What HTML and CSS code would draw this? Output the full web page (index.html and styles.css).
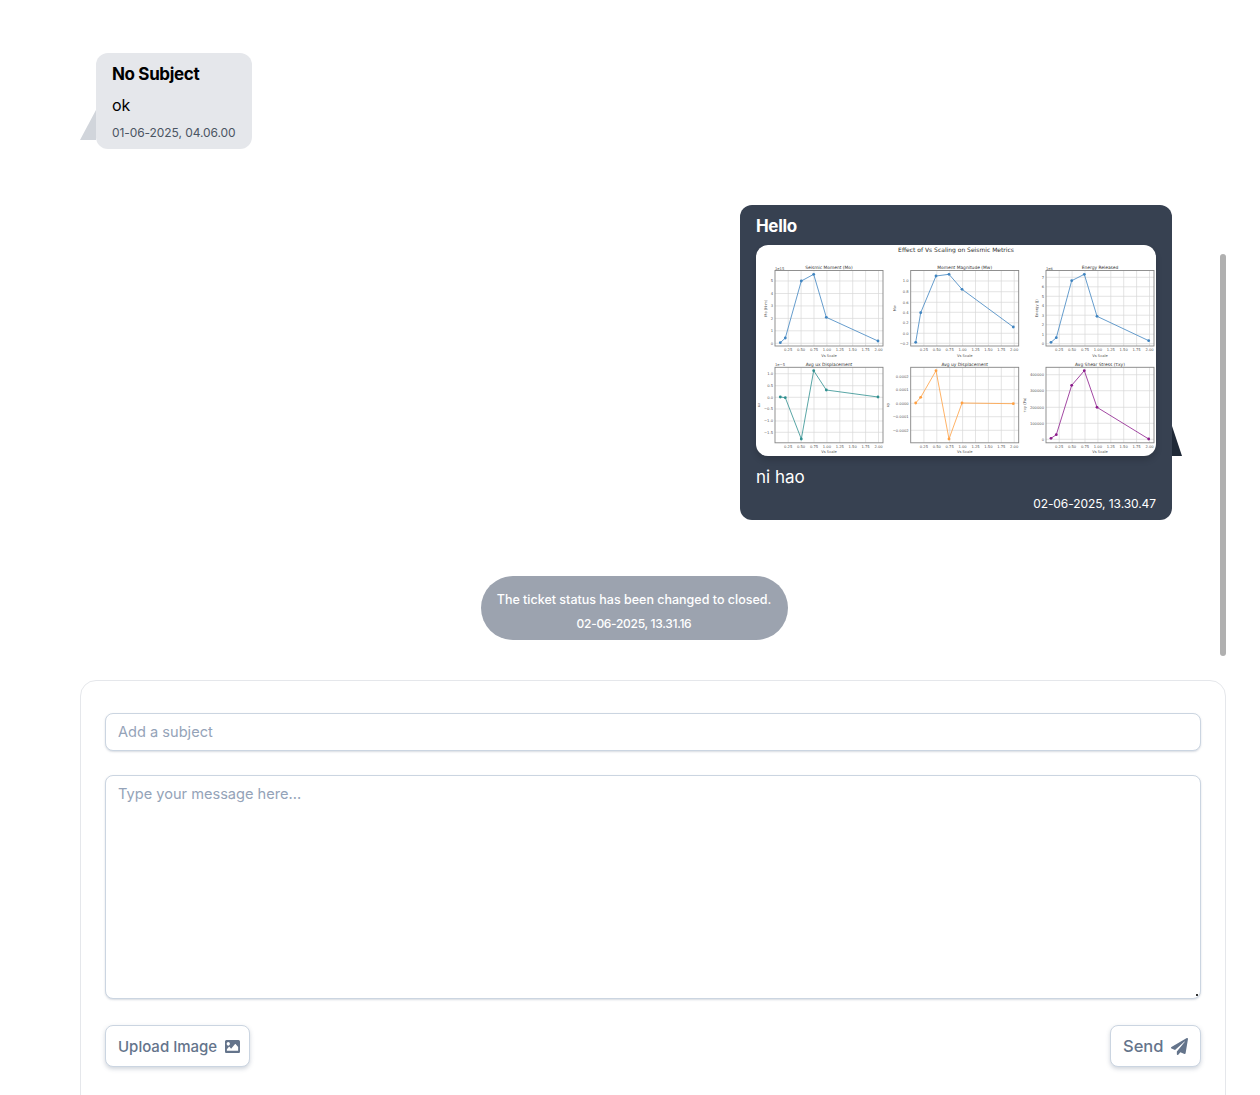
FILE: index.html
```html
<!DOCTYPE html>
<html>
<head>
	<meta charset='utf-8'>
	<title>Ticket</title>
	<link rel="stylesheet" href="styles.css">
</head>
<body>

<div class="page">
	<div class="scroll-thumb"></div>

	<div class="chat">
		<div class="msg msg-in">
			<span class="tail tail-in"></span>
			<div class="msg-title">No Subject</div>
			<div class="msg-text">ok</div>
			<div class="msg-date">01-06-2025, 04.06.00</div>
		</div>

		<div class="msg msg-out">
			<span class="tail tail-out"></span>
			<div class="msg-title">Hello</div>
			<svg class="attachment" id="plots" viewBox="0 0 400 211" width="400" height="211"></svg>
			<div class="msg-text">ni hao</div>
			<div class="msg-date">02-06-2025, 13.30.47</div>
		</div>

		<div class="status">
			<div>The ticket status has been changed to closed.</div>
			<div class="status-date">02-06-2025, 13.31.16</div>
		</div>
	</div>

	<form class="reply">
		<input class="field field-subject" type="text" placeholder="Add a subject">
		<textarea class="field field-body" placeholder="Type your message here..."></textarea>
		<div class="actions">
			<button type="button" class="btn">
				Upload Image
				<svg class="btn-icon icon-image" viewBox="0 64 512 384" preserveAspectRatio="none" width="15" height="13"><path d="M464 448H48c-26.51 0-48-21.49-48-48V112c0-26.51 21.49-48 48-48h416c26.51 0 48 21.49 48 48v288c0 26.51-21.49 48-48 48zM112 120c-30.928 0-56 25.072-56 56s25.072 56 56 56 56-25.072 56-56-25.072-56-56-56zM64 384h384V272l-87.515-87.515c-4.686-4.686-12.284-4.686-16.971 0L208 320l-55.515-55.515c-4.686-4.686-12.284-4.686-16.971 0L64 336v48z"/></svg>
			</button>
			<button type="button" class="btn btn-send">
				Send
				<svg class="btn-icon" viewBox="0 0 512 512" width="17" height="17"><path d="M476 3.2L12.5 270.6c-18.1 10.4-15.8 35.6 2.2 43.2L121 358.4l287.3-253.2c5.5-4.9 13.3 2.6 8.6 8.3L176 407v80.5c0 23.6 28.5 32.9 42.5 15.8L282 426l124.6 52.2c14.2 6 30.4-2.9 33-18.2l72-432C515 7.8 493.3-6.8 476 3.2z"/></svg>
			</button>
		</div>
	</form>
</div>

<script src="charts.js"></script>
</body>
</html>
```

FILE: styles.css
```css
html, body{
	margin: 0;
	height: 1095px;
	overflow: hidden;
	background-color: #fff;
}
body{
	font-family: Inter, "Liberation Sans", sans-serif;
}
.page{
	position: relative;
	padding: 0 34px 0 80px;
}
.scroll-thumb{
	position: absolute;
	top: 254px;
	right: 34px;
	width: 6px;
	height: 402px;
	border-radius: 3px;
	background-color: #b0b0b0;
}

.chat{
	width: 1108px;
	height: 680px;
	box-sizing: border-box;
	padding: 53px 16px 0 16px;
	display: flex;
	flex-direction: column;
	gap: 56px;
	overflow: hidden;
}
.msg{
	position: relative;
	box-sizing: border-box;
	padding: 12px 16px;
	border-radius: 12px;
}
.msg-in{
	align-self: flex-start;
	width: 156px;
	height: 96px;
	background-color: #e5e7eb;
	color: #000;
}
.msg-out{
	align-self: flex-end;
	width: 432px;
	height: 315px;
	background-color: #374151;
	color: #fff;
}
.msg-title{
	font-size: 17px;
	line-height: 18px;
	font-weight: 700;
	letter-spacing: -0.35px;
}
.msg-text{
	margin-top: 13px;
	font-size: 16px;
	line-height: 18px;
}
.msg-date{
	font-size: 12px;
	line-height: 18px;
	letter-spacing: -0.08px;
	white-space: nowrap;
}
.msg-in .msg-date{
	margin-top: 10px;
	color: #4b5563;
}
.msg-out .msg-text{
	margin-top: 12px;
	font-size: 17px;
}
.msg-out .msg-date{
	margin-top: 9px;
	text-align: right;
}
.tail{
	position: absolute;
	bottom: 9px;
	width: 16px;
	height: 30px;
}
.tail-in{
	left: -16px;
	background-color: #d1d5db;
	clip-path: polygon(100% 0, 100% 100%, 0 100%);
}
.tail-out{
	right: -10px;
	bottom: 64px;
	width: 10px;
	background-color: #1f2937;
	clip-path: polygon(0 0, 100% 100%, 0 100%);
}
.attachment{
	display: block;
	margin-top: 10px;
	border-radius: 12px;
	background-color: #fff;
	box-shadow: 0 4px 6px rgba(0, 0, 0, 0.15);
}

.status{
	align-self: center;
	box-sizing: border-box;
	width: 307px;
	height: 64px;
	padding: 12px 0;
	border-radius: 32px;
	background-color: #9ca3af;
	color: #fff;
	text-align: center;
	font-size: 12.5px;
	line-height: 24px;
	font-weight: 500;
	white-space: nowrap;
}
.status-date{
	font-size: 12px;
	letter-spacing: -0.3px;
}

.reply{
	box-sizing: border-box;
	padding: 32px 24px 64px 24px;
	border: 1px solid #e5e7eb;
	border-radius: 16px;
	background-color: #fff;
	display: flex;
	flex-direction: column;
	gap: 24px;
}
.field{
	display: block;
	box-sizing: border-box;
	width: 100%;
	margin: 0;
	padding: 0 12px;
	border: 1px solid #cbd5e1;
	border-radius: 8px;
	box-shadow: 0 1px 2px rgba(100, 116, 139, 0.25);
	font-family: inherit;
	font-size: 14.6px;
	color: #334155;
	outline: none;
}
.field::placeholder{
	color: #94a3b8;
	opacity: 1;
}
.field-subject{
	height: 38px;
	padding-bottom: 1px;
}
.field-body{
	height: 224px;
	padding-top: 8px;
	line-height: 20px;
}
.field-body::-webkit-resizer{
	background: linear-gradient(#333, #333) no-repeat right 2px bottom 2px / 2px 2px;
}
.actions{
	margin-top: 2px;
	display: flex;
	justify-content: space-between;
}
.btn{
	display: flex;
	align-items: center;
	gap: 8px;
	box-sizing: border-box;
	width: 145px;
	height: 42px;
	padding: 0 0 0 12px;
	border: 1px solid #cbd5e1;
	border-radius: 8px;
	background-color: #fff;
	box-shadow: 0 2px 4px rgba(100, 116, 139, 0.3);
	font-family: inherit;
	font-size: 15px;
	font-weight: 500;
	color: #64748b;
}
.btn-send{
	width: 91px;
	font-size: 16.5px;
}
.btn-icon{
	fill: #64748b;
}

/* plots */
.p-grid{
	fill: none;
	stroke: #d8d8d8;
	stroke-width: 0.7;
}
.p-frame{
	fill: none;
	stroke: #858585;
	stroke-width: 0.9;
}
.p-line{
	fill: none;
	stroke-width: 0.8;
}
.p-text{
	font-family: "DejaVu Sans", sans-serif;
	font-size: 3.7px;
	fill: #555;
}
.p-title{
	font-size: 4.4px;
	fill: #333;
}
.p-main{
	font-size: 6px;
	fill: #333;
}
```

FILE: charts.js
```js
// the six subplots of the attached picture, in picture coordinates
var NS = "http://www.w3.org/2000/svg"
var svg = document.getElementById("plots")

var plots = [
	{title:"Seismic Moment (Mo)", x:19, y:25.5, color:"#3f84c0", off:"1e15", ylabel:"Mo (N·m)", lx:10.7,
		pts:[[24.3,97.7],[29.3,93],[45.3,36],[57.7,29.3],[70.3,72.3],[122,96]],
		ticks:[["0",98.3],["1",85.8],["2",73.4],["3",60.9],["4",48.5],["5",36]]},
	{title:"Moment Magnitude (Mw)", x:154.7, y:25.5, color:"#3f84c0", ylabel:"Mw", lx:139.7,
		pts:[[159.7,97.3],[164.7,67.7],[180,31],[193,29.3],[206,44.3],[257.3,82]],
		ticks:[["1.0",36],["0.8",46.7],["0.6",57.3],["0.4",67.3],["0.2",77.7],["0.0",88.3],["−0.2",98.3]]},
	{title:"Energy Released", x:290, y:25.5, color:"#3f84c0", off:"1e6", ylabel:"Energy (J)", lx:281.7,
		pts:[[295,97.3],[300.3,92.7],[315.7,35.7],[328.3,29.3],[341,71.3],[392.7,95.7]],
		ticks:[["0",98.7],["1",89.2],["2",79.7],["3",70.2],["4",60.8],["5",51.3],["6",41.8],["7",32.3]]},
	{title:"Avg ux Displacement", x:19, y:122.3, color:"#2f8f8f", off:"1e−5", ylabel:"ux", lx:4,
		pts:[[24.3,152],[29.3,152.7],[45.3,194],[57.7,125.7],[70.3,145],[122,152]],
		ticks:[["1.0",128.7],["0.5",140.7],["0.0",152.3],["−0.5",164],["−1.0",176],["−1.5",187.3]]},
	{title:"Avg uy Displacement", x:154.7, y:122.3, color:"#ff9f40", ylabel:"uy", lx:133,
		pts:[[159.7,158],[164.7,152.3],[180,125.7],[193,194],[206,158],[257.3,158.7]],
		ticks:[["0.0002",131.3],["0.0001",144.7],["0.0000",158.3],["−0.0001",171.7],["−0.0002",185.3]]},
	{title:"Avg Shear Stress (τxy)", x:290, y:122.3, color:"#8b1a8b", ylabel:"τxy (Pa)", lx:269.7,
		pts:[[295,193.3],[300.3,189.7],[315.7,140.3],[328.3,125.7],[341,162.3],[392.7,194]],
		ticks:[["400000",129.7],["300000",145.7],["200000",162.3],["100000",178.3],["0",194.3]]}
]

function add(tag, attrs, text){
	var el = document.createElementNS(NS, tag)
	for (var k in attrs) el.setAttribute(k, attrs[k])
	if (text) el.textContent = text
	svg.appendChild(el)
	return el
}

function label(x, y, text, anchor, cls){
	return add("text", {x:x, y:y, "text-anchor":anchor, "class":"p-text " + (cls || "")}, text)
}

add("text", {x:200, y:6.5, "text-anchor":"middle", "class":"p-text p-main"}, "Effect of Vs Scaling on Seismic Metrics")

var xlabels = ["0.25","0.50","0.75","1.00","1.25","1.50","1.75","2.00"]

plots.forEach(function(p){
	var w = 108, h = 75.5, grid = ""
	var bottom = p.y + h

	xlabels.forEach(function(t, i){
		var tx = p.x + 13.2 + i * 12.9
		grid += "M" + tx + " " + p.y + "V" + bottom
		label(tx, bottom + 5, t, "middle")
	})
	p.ticks.forEach(function(t){
		grid += "M" + p.x + " " + t[1] + "H" + (p.x + w)
		label(p.x - 2, t[1] + 1.3, t[0], "end")
	})
	add("path", {d:grid, "class":"p-grid"})
	add("rect", {x:p.x, y:p.y, width:w, height:h, "class":"p-frame"})

	add("polyline", {points:p.pts.join(" "), stroke:p.color, "class":"p-line"})
	p.pts.forEach(function(pt){
		add("circle", {cx:pt[0], cy:pt[1], r:1.4, fill:p.color})
	})

	label(p.x + w / 2, p.y - 1.5, p.title, "middle", "p-title")
	label(p.x + w / 2, bottom + 10.5, "Vs Scale", "middle")
	if (p.off) label(p.x, p.y - 1, p.off, "start")

	var ly = p.y + h / 2
	add("text", {x:p.lx, y:ly, "text-anchor":"middle", "class":"p-text", transform:"rotate(-90 " + p.lx + " " + ly + ")"}, p.ylabel)
})
```
